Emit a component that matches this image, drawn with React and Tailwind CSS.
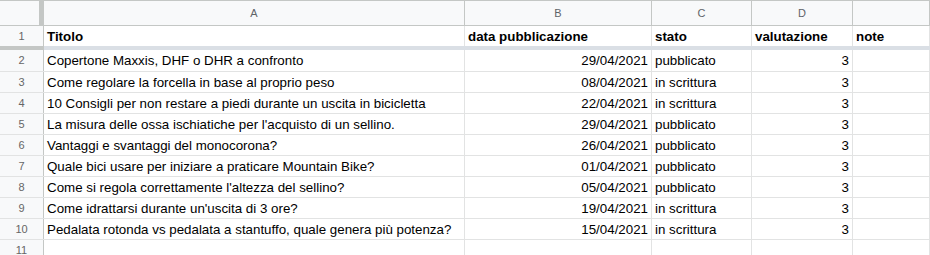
import React from "react";

const rows = [
  ["Copertone Maxxis, DHF o DHR a confronto", "29/04/2021", "pubblicato", "3"],
  ["Come regolare la forcella in base al proprio peso", "08/04/2021", "in scrittura", "3"],
  ["10 Consigli per non restare a piedi durante un uscita in bicicletta", "22/04/2021", "in scrittura", "3"],
  ["La misura delle ossa ischiatiche per l'acquisto di un sellino.", "29/04/2021", "pubblicato", "3"],
  ["Vantaggi e svantaggi del monocorona?", "26/04/2021", "pubblicato", "3"],
  ["Quale bici usare per iniziare a praticare Mountain Bike?", "01/04/2021", "pubblicato", "3"],
  ["Come si regola correttamente l'altezza del sellino?", "05/04/2021", "pubblicato", "3"],
  ["Come idrattarsi durante un'uscita di 3 ore?", "19/04/2021", "in scrittura", "3"],
  ["Pedalata rotonda vs pedalata a stantuffo, quale genera più potenza?", "15/04/2021", "in scrittura", "3"],
];

// column widths include the 1px right gridline
const cols = ["w-[421px]", "w-[187px]", "w-[100px]", "w-[101px]", "flex-1"];

function Cell({ w, right, bold, children }) {
  return (
    <div
      className={`${w} shrink-0 h-full border-r border-[#e2e3e3] px-[3px] pt-px flex items-center overflow-hidden whitespace-nowrap ${
        right ? "justify-end" : ""
      } ${bold ? "font-bold" : ""}`}
    >
      {children}
    </div>
  );
}

function RowNum({ n }) {
  return (
    <div className="w-[44px] shrink-0 h-full bg-[#f8f9fa] border-r border-[#c4c7c5] flex items-center justify-center text-[11px] text-[#666]">
      {n}
    </div>
  );
}

export default function App() {
  return (
    <div
      className="w-[930px] h-[255px] overflow-hidden bg-white text-[13.33px] text-black"
      style={{ fontFamily: '"Liberation Sans", Arial, sans-serif' }}
    >
      {/* column letters */}
      <div className="flex h-[26px] bg-[#f8f9fa] border-t border-b border-[#c4c7c5] text-[11px] text-[#5f6368]">
        <div className="w-[44px] shrink-0 h-full border-r-[5px] border-[#c4c7c5]" />
        {["A", "B", "C", "D", ""].map((l, i) => (
          <div
            key={i}
            className={`${cols[i]} shrink-0 h-full border-r border-[#c4c7c5] flex items-center justify-center`}
          >
            {l}
          </div>
        ))}
      </div>

      {/* frozen header row */}
      <div className="flex h-[20px]">
        <RowNum n={1} />
        <Cell w={cols[0]} bold>Titolo</Cell>
        <Cell w={cols[1]} bold>data pubblicazione</Cell>
        <Cell w={cols[2]} bold>stato</Cell>
        <Cell w={cols[3]} bold>valutazione</Cell>
        <Cell w={cols[4]} bold>note</Cell>
      </div>
      <div className="flex h-[4px]">
        <div className="w-[44px] shrink-0 bg-[#c4c7c5]" />
        <div className="flex-1 bg-[#dadfe5]" />
      </div>

      {rows.map((r, i) => (
        <div
          key={i}
          className={`flex ${i === 0 ? "h-[22px]" : "h-[21px]"} border-b border-[#e2e3e3]`}
        >
          <RowNum n={i + 2} />
          <Cell w={cols[0]}>{r[0]}</Cell>
          <Cell w={cols[1]} right>{r[1]}</Cell>
          <Cell w={cols[2]}>{r[2]}</Cell>
          <Cell w={cols[3]} right>{r[3]}</Cell>
          <Cell w={cols[4]} />
        </div>
      ))}

      <div className="flex h-[21px]">
        <RowNum n={11} />
        {cols.map((w, i) => (
          <Cell key={i} w={w} />
        ))}
      </div>
    </div>
  );
}
